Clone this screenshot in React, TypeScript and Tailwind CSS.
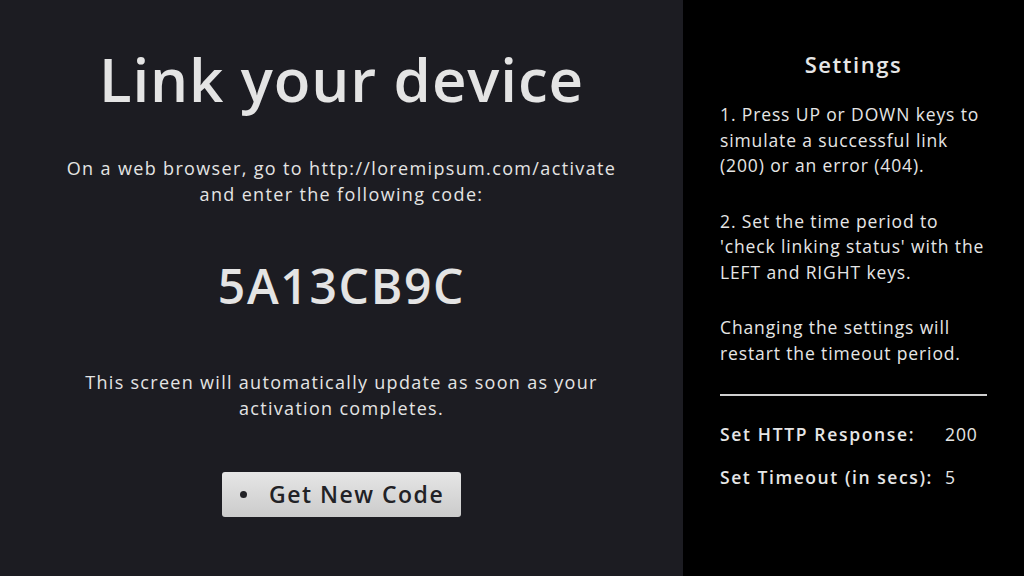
import React from "react";

const font = { fontFamily: '"Open Sans", "Liberation Sans", sans-serif' };

export default function App() {
  return (
    <div className="flex w-[1024px] h-[576px] overflow-hidden" style={font}>
      <div className="w-[683px] h-full bg-[#1c1c22] flex flex-col items-center pt-[43px] text-[#e4e4e4]">
        <h1 className="text-[60px] leading-[72px] font-semibold tracking-[0.015em]">Link your device</h1>
        <p className="mt-[40px] text-[18px] leading-[26px] text-center tracking-[0.075em]">
          On a web browser, go to http://loremipsum.com/activate
          <br />
          and enter the following code:
        </p>
        <div className="mt-[51px] text-[48px] leading-[56px] font-semibold tracking-[0.035em]">5A13CB9C</div>
        <p className="mt-[55px] text-[18px] leading-[26px] text-center tracking-[0.072em]">
          This screen will automatically update as soon as your
          <br />
          activation completes.
        </p>
        <button className="mt-[51px] w-[239px] h-[45px] rounded-[3px] bg-gradient-to-b from-[#e6e6e6] to-[#cbcbcb] flex items-center pl-[18px] text-[#222226]">
          <span className="w-[7px] h-[7px] rounded-full bg-[#222226]" />
          <span className="ml-[22px] text-[23px] leading-none font-semibold tracking-[0.065em]">Get New Code</span>
        </button>
      </div>
      <div className="flex-1 h-full bg-black px-[37px] pt-[50px] text-[#e6e6e6]">
        <h2 className="text-center text-[22px] leading-[28px] font-semibold tracking-[0.07em]">Settings</h2>
        <p className="mt-[24px] text-[17.5px] leading-[25.5px] tracking-[0.05em]">
          1. Press UP or DOWN keys to simulate a successful link (200) or an error (404).
        </p>
        <p className="mt-[30px] text-[17.5px] leading-[25.5px] tracking-[0.05em]">
          2. Set the time period to 'check linking status' with the LEFT and RIGHT keys.
        </p>
        <p className="mt-[30px] text-[17.5px] leading-[25.5px] tracking-[0.05em]">
          Changing the settings will restart the timeout period.
        </p>
        <div className="mt-[28px] h-[2px] bg-[#cfcfcf]" />
        <div className="mt-[26px] flex text-[17.5px] leading-[25.5px] tracking-[0.095em]">
          <span className="w-[225px] shrink-0 font-semibold">Set HTTP Response:</span>
          <span className="tracking-[0.05em]">200</span>
        </div>
        <div className="mt-[17px] flex text-[17.5px] leading-[25.5px] tracking-[0.09em]">
          <span className="w-[225px] shrink-0 font-semibold">Set Timeout (in secs):</span>
          <span className="tracking-[0.05em]">5</span>
        </div>
      </div>
    </div>
  );
}
